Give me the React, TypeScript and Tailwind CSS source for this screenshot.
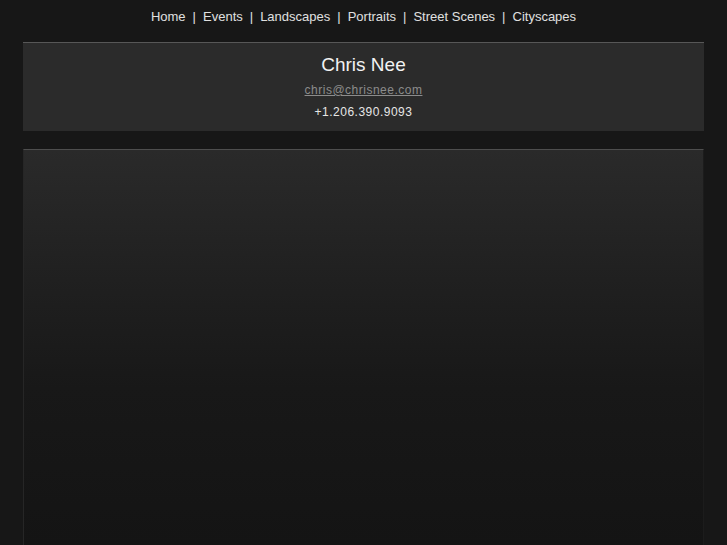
import React from 'react';

const links = ['Home', 'Events', 'Landscapes', 'Portraits', 'Street Scenes', 'Cityscapes'];

export default function App() {
  return (
    <div className="min-h-screen bg-[#171717] font-['Liberation_Sans',Arial,sans-serif] flex flex-col">
      <nav className="h-[42px] pt-[9px] flex justify-center text-[13px] text-[#e0e0e0] leading-[16px]">
        {links.map((l, i) => (
          <React.Fragment key={l}>
            {i > 0 && <span className="px-[7px]">|</span>}
            <a href="#" className="hover:underline">{l}</a>
          </React.Fragment>
        ))}
      </nav>

      <header className="mx-[23px] h-[89px] bg-[#2b2b2b] border-t border-[#575757] flex flex-col items-center pt-[10px]">
        <h1 className="text-[19px] leading-[24px] text-[#f2f2f2]">Chris Nee</h1>
        <a href="#" className="mt-[5px] text-[12px] leading-[16px] tracking-[0.5px] text-[#8c8c8c] underline">chris@chrisnee.com</a>
        <p className="mt-[6px] text-[12px] leading-[16px] tracking-[0.5px] text-[#e6e6e6]">+1.206.390.9093</p>
      </header>

      <main className="mx-[23px] mt-[18px] flex-1 min-h-[396px] border-t border-l border-r border-[#4e4e4e] border-l-[#262626] border-r-[#1c1c1c] bg-gradient-to-b from-[#2a2a2a] via-[#181818] via-60% to-[#141414]" />
    </div>
  );
}
